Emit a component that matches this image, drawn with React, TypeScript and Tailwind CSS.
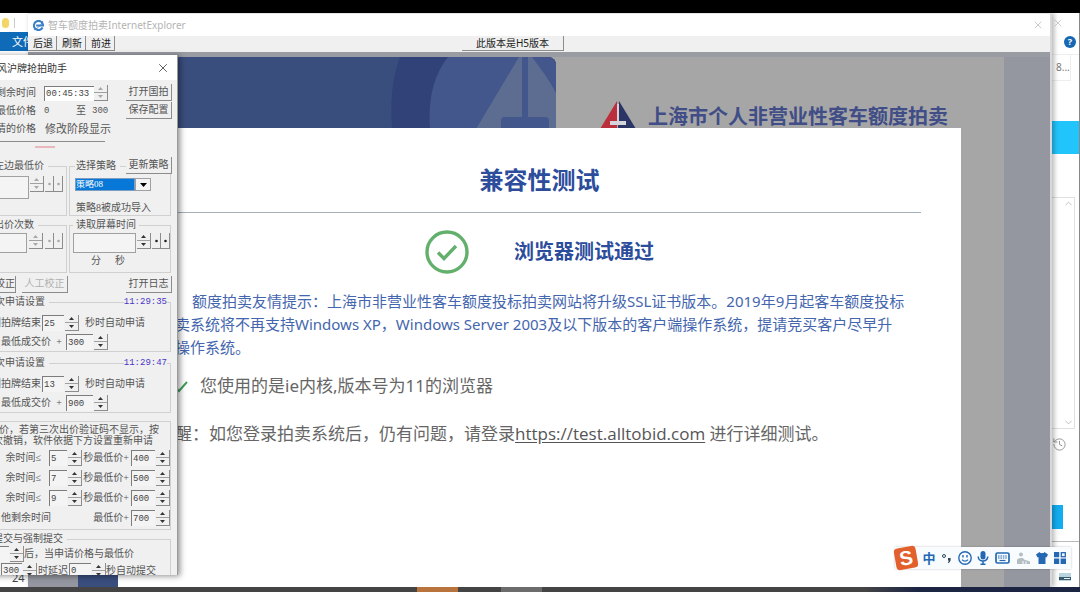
import React from "react";
import { X, History, ChevronUp, ChevronDown } from "lucide-react";

const SANS = "font-['Noto_Sans','Noto_Sans_CJK_SC',sans-serif]";
const SONG = "font-['Liberation_Serif','Noto_Sans_CJK_SC',serif]";
const MONO = "font-['Liberation_Mono',monospace]";

function Spinner({ label, muted = false }: { label: string; muted?: boolean }) {
  const tone = muted ? "text-[#a8a8a8]" : "text-[#333]";
  return (
    <span className={`flex h-4 w-[14px] shrink-0 flex-col border-r border-b border-[#8c8c8c] ${tone}`}>
      <button aria-label={`${label} 增加`} className="flex flex-1 items-center justify-center border-b border-[#a0a0a0]">
        <svg width="5" height="3" viewBox="0 0 5 3"><path d="M2.5 0 5 3H0z" fill="currentColor" /></svg>
      </button>
      <button aria-label={`${label} 减少`} className="flex flex-1 items-center justify-center">
        <svg width="5" height="3" viewBox="0 0 5 3"><path d="M0 0h5L2.5 3z" fill="currentColor" /></svg>
      </button>
    </span>
  );
}

function NumberBox({ label, value, box }: { label: string; value: string; box: string }) {
  return (
    <span className="flex items-center gap-px">
      <input
        aria-label={label}
        defaultValue={value}
        className={`h-4 border-t border-l border-[#7c7c7c] bg-[#f4f4f4] pl-px text-[9px] leading-none text-[#444] ${MONO} ${box}`}
      />
      <Spinner label={label} />
    </span>
  );
}

function SideButtons({ muted = false }: { muted?: boolean }) {
  const tone = muted ? "text-[#a8a8a8]" : "text-[#222]";
  return (
    <span className={`flex h-4 ${tone}`}>
      {["向左", "向右"].map((name) => (
        <button key={name} aria-label={name} className="flex w-[9px] items-center justify-center border-r border-b border-[#8c8c8c]">
          <svg width="3" height="4" viewBox="0 0 3 4"><circle cx="1.5" cy="2" r="1.3" fill="currentColor" /></svg>
        </button>
      ))}
    </span>
  );
}

function PushButton({ children, disabled = false }: { children: React.ReactNode; disabled?: boolean }) {
  return (
    <button
      disabled={disabled}
      className="h-[17px] w-[46px] border-r border-b border-[#8c8c8c] bg-[#f0f0f0] text-[10px] leading-none whitespace-nowrap disabled:text-[#b0b0b0]"
    >
      {children}
    </button>
  );
}

function ApplyGroup({ time, seconds, price }: { time: string; seconds: string; price: string }) {
  return (
    <fieldset className="mr-[6px] h-14 border-r border-b border-[#d0d0d0]">
      <legend className="flex w-full items-center pl-[11px] leading-3">
        <span>次申请设置</span>
        <span className="ml-1 h-px flex-1 bg-[#d0d0d0]" />
        <span className={`text-[9px] text-[#4a35c8] ${MONO}`}>{time}</span>
        <span className="h-px w-[3px] bg-[#d0d0d0]" />
      </legend>
      <div className="flex flex-col gap-px pt-1.5">
        <div className="flex h-[18px] items-center">
          <span className="flex w-[58px] justify-end pr-px whitespace-nowrap">国拍牌结束</span>
          <NumberBox label="结束秒数" value={seconds} box="w-[22px]" />
          <span className="pl-1.5">秒时自动申请</span>
        </div>
        <div className="flex h-[18px] items-center">
          <span className="flex w-[82px] justify-between pr-1 pl-[17px]">
            <span>最低成交价</span>
            <span>+</span>
          </span>
          <NumberBox label="加价" value={price} box="w-[27px]" />
        </div>
      </div>
    </fieldset>
  );
}

function RetryRow({ seconds, price }: { seconds?: string; price: string }) {
  return (
    <div className="flex h-5 items-center">
      {seconds ? (
        <>
          <span className="flex w-16 justify-end pr-2">余时间≤</span>
          <NumberBox label="剩余秒数" value={seconds} box="w-[18px]" />
        </>
      ) : (
        <span className="w-[97px] pl-4">他剩余时间</span>
      )}
      <span className="ml-auto pr-0.5">{seconds ? "秒最低价+" : "最低价+"}</span>
      <NumberBox label="加价" value={price} box="w-6" />
    </div>
  );
}

function HelperWindow() {
  return (
    <section
      className={`absolute top-[42px] bottom-3 -left-4 flex w-[194px] flex-col overflow-hidden border-r border-[#999] bg-[#f0f0f0] text-[10px] leading-3 whitespace-nowrap text-[#555] shadow-[2px_1px_6px_rgba(0,0,0,0.45)] ${SONG}`}
    >
      <header className={`flex h-[25px] shrink-0 items-center justify-between bg-white pr-[7px] pl-[13px] text-[#333] ${SANS}`}>
        <h2>风沪牌抢拍助手</h2>
        <button aria-label="关闭" className="text-[#555]"><X size={14} strokeWidth={1.6} /></button>
      </header>

      <div className="flex shrink-0 justify-between pt-1 pr-[5px]">
        <div>
          <div className="flex h-[18px] items-center">
            <label htmlFor="remain" className="w-[52px] text-right">剩余时间</label>
            <input id="remain" defaultValue="00:45:33" className={`ml-2 h-[15px] w-[50px] border-t border-l border-[#7c7c7c] bg-white pl-px text-[9px] text-[#444] ${MONO}`} />
            <Spinner label="剩余时间" muted />
          </div>
          <div className="flex h-[18px] items-center">
            <span className="w-[52px] text-right">最低价格</span>
            <span className={`ml-2 w-8 text-[9px] ${MONO}`}>0</span>
            <span className="w-4">至</span>
            <span className={`text-[9px] ${MONO}`}>300</span>
          </div>
          <div className="flex h-[18px] items-center">
            <span className="flex w-[52px] justify-end">情的价格</span>
            <span className="ml-[9px] text-[11px]">修改阶段显示</span>
          </div>
        </div>
        <div className="flex flex-col gap-px">
          <PushButton>打开国拍</PushButton>
          <PushButton>保存配置</PushButton>
        </div>
      </div>

      <div className="mt-[3px] mr-[72px] flex h-[19px] shrink-0 justify-center border-t border-[#8c8c8c] pt-1">
        <span className="h-[2px] w-5 bg-[#e8b8bc]" />
      </div>

      <div className="relative grid shrink-0 grid-cols-[83px_1fr] gap-x-0.5 gap-y-[3px] pr-[6px]">
        <fieldset className="h-14 border border-[#d0d0d0]">
          <legend className="ml-[9px] pr-1">左边最低价</legend>
          <div className="flex items-start gap-px pt-1">
            <input aria-label="左边最低价" className="h-[23px] w-11 border border-[#a0a0a0] bg-[#f4f4f4]" />
            <Spinner label="左边最低价" muted />
            <SideButtons muted />
          </div>
        </fieldset>
        <fieldset className="h-14 border border-[#d0d0d0] pl-[5px]">
          <legend className="pr-1 pl-px">选择策略</legend>
          <div className="mt-1.5 flex h-[13px] w-[76px] text-white">
            <select aria-label="选择策略" className="h-full flex-1 appearance-none border border-[#7c9cc0] bg-[#0878d8] text-[9px] leading-none">
              <option>策略08</option>
            </select>
            <span className="flex w-4 items-center justify-center border border-[#a0a0a0] bg-[#f4f4f4] text-black">
              <svg width="7" height="4" viewBox="0 0 7 4"><path d="M0 0h7L3.5 4z" fill="currentColor" /></svg>
            </span>
          </div>
          <p className="mt-[11px] pl-px">策略8被成功导入</p>
        </fieldset>
        <div className="absolute -top-[3px] right-[5px]"><PushButton>更新策略</PushButton></div>

        <fieldset className="h-[54px] border border-[#d0d0d0]">
          <legend className="ml-[9px] pr-1">出价次数</legend>
          <div className="flex items-start gap-0.5 pt-0.5">
            <input aria-label="出价次数" className="h-5 w-[42px] border border-[#a0a0a0] bg-[#f4f4f4]" />
            <Spinner label="出价次数" muted />
            <SideButtons muted />
          </div>
        </fieldset>
        <fieldset className="h-[54px] border border-[#d0d0d0] pl-[3px]">
          <legend className="px-[3px]">读取屏幕时间</legend>
          <div className="flex items-start gap-px pt-0.5">
            <input aria-label="读取屏幕时间" className="h-5 w-[63px] border border-[#a0a0a0] bg-[#f4f4f4]" />
            <Spinner label="读取屏幕时间" />
            <SideButtons />
          </div>
          <p className="flex gap-[14px] pt-0.5 pl-[18px]"><span>分</span><span>秒</span></p>
        </fieldset>
      </div>

      <div className="mt-[3px] mb-[3px] flex h-[17px] shrink-0 items-center pr-[5px]">
        <button className="h-[17px] w-8 border-r border-b border-[#8c8c8c] text-right">校正</button>
        <span className="ml-1.5"><PushButton disabled>人工校正</PushButton></span>
        <span className="ml-auto"><PushButton>打开日志</PushButton></span>
      </div>

      <div className="flex shrink-0 flex-col gap-[5px]">
        <ApplyGroup time="11:29:35" seconds="25" price="300" />
        <ApplyGroup time="11:29:47" seconds="13" price="900" />
      </div>

      <section className="mt-2 mr-[6px] h-[109px] shrink-0 border border-[#d0d0d0]">
        <p className="pt-0.5 pl-[14px] leading-[11px]">价，若第三次出价验证码不显示，按</p>
        <p className="pb-0.5 pl-2 leading-[11px]">次撤销，软件依据下方设置重新申请</p>
        <RetryRow seconds="5" price="400" />
        <RetryRow seconds="7" price="500" />
        <RetryRow seconds="9" price="600" />
        <RetryRow price="700" />
      </section>

      <fieldset className="mt-[3px] mr-[6px] shrink-0 border border-[#d0d0d0]">
        <legend className="pr-1 pl-2">提交与强制提交</legend>
        <div className="flex h-[17px] items-center">
          <NumberBox label="提交秒数" value="" box="w-6" />
          <span>后，当申请价格与最低价</span>
        </div>
        <div className="flex h-[17px] items-center pl-4">
          <NumberBox label="价差" value="300" box="w-[21px]" />
          <span className="px-px">时延迟</span>
          <NumberBox label="延迟秒数" value="0" box="w-[22px]" />
          <span>秒自动提交</span>
        </div>
      </fieldset>
    </section>
  );
}

function Sailboat() {
  return (
    <svg className="h-[72px] w-[172px]" viewBox="0 0 172 72" aria-hidden="true">
      <path d="M16 0h156v72H8C6 44 8 22 16 0z" fill="#304277" />
      <path d="M64 0h108v72H46C44 46 48 20 64 0z" fill="#43578c" />
      <path d="M135 0 92 72h48V0z" fill="#5d6c91" />
      <path d="M143 0h5c9 12 18 24 24 36v36h-29z" fill="#5d6c91" />
      <path d="M138 0h6v62h-6z" fill="#43578c" />
      <rect x="117" y="60" width="48" height="16" rx="4" fill="#43578c" />
    </svg>
  );
}

function TestDialog() {
  return (
    <section className="absolute top-[71px] right-[43px] bottom-0 left-10 bg-white px-10">
      <h1 className="flex h-[85px] items-center justify-center border-b border-[#a4b0ba] pt-5 text-2xl font-bold text-[#2c4c9c]">兼容性测试</h1>
      <div className="flex h-[77px] items-center justify-center gap-[45px]">
        <svg width="44" height="44" viewBox="0 0 44 44" fill="none" stroke="#62b06c" strokeWidth="3.4" aria-hidden="true">
          <circle cx="22" cy="22" r="20" />
          <path d="m13 22.5 6 6 12-12.5" />
        </svg>
        <h2 className="text-xl font-bold text-[#2c4c9c]">浏览器测试通过</h2>
      </div>
      <p className="pl-0.5 text-[15px] leading-[23px] whitespace-nowrap text-[#4466ae]">
        <span className="block pl-8">额度拍卖友情提示：上海市非营业性客车额度投标拍卖网站将升级SSL证书版本。2019年9月起客车额度投标</span>
        <span className="block">拍卖系统将不再支持Windows XP，Windows Server 2003及以下版本的客户端操作系统，提请竞买客户尽早升</span>
        <span className="block">级操作系统。</span>
      </p>
      <p className="mt-[15px] flex h-6 items-center gap-3 pl-4 text-[17px] text-[#666]">
        <svg width="14" height="14" viewBox="0 0 14 14" fill="none" stroke="#3fa05a" strokeWidth="2" aria-hidden="true"><path d="m1 8 4 4 8-9" /></svg>
        您使用的是ie内核,版本号为11的浏览器
      </p>
      <p className="mt-6 h-6 text-[17px] leading-6 whitespace-nowrap text-[#666]">
        提醒：如您登录拍卖系统后，仍有问题，请登录
        <a href="https://test.alltobid.com" className="font-['Open_Sans',sans-serif] text-[#555] underline underline-offset-2">https://test.alltobid.com</a> 进行详细测试。
      </p>
    </section>
  );
}

function BrowserWindow() {
  return (
    <main className="absolute inset-y-0 right-[28px] left-[28px] flex flex-col border-t border-r-2 border-t-[#e4e4e4] border-r-[#d8d8dc] bg-[#9496a0] shadow-[2px_0_5px_rgba(0,0,0,0.3)]">
      <header className="flex h-[22px] shrink-0 items-center bg-white pr-[6px] pl-[5px] text-[#b4b4b4]">
        <svg width="11" height="11" viewBox="0 0 12 12" fill="none" stroke="#3b7fc4" aria-hidden="true">
          <path d="M10.5 8.2A5 5 0 1 1 11 6H3.4" strokeWidth="2.2" />
          <path d="M1 10.5C3 11 9 6 10.8 1" strokeWidth="1" />
        </svg>
        <span className={`pl-1 text-[10px] ${SONG}`}>智车额度拍卖</span>
        <span className="text-[10px]">InternetExplorer</span>
        <button aria-label="关闭窗口" className="ml-auto"><X size={12} strokeWidth={1.4} /></button>
      </header>
      <nav className="flex h-4 shrink-0 bg-[#f0f0f0] text-[10px] leading-none text-[#222]">
        {["后退", "刷新", "前进"].map((name) => (
          <button key={name} className="h-[15px] w-[29px] border-r border-b border-[#8c8c8c] pl-0.5">{name}</button>
        ))}
        <button className="mr-auto ml-[347px] h-[15px] w-[102px] border-r border-b border-[#8c8c8c]">此版本是H5版本</button>
      </nav>
      <div className="flex flex-1 border-t-[5px] border-[#9a9ca4] pr-[46px] pl-[50px]">
        <div className="relative flex flex-1 bg-[#a6a6a6]">
          <div className="flex w-[478px] shrink-0 justify-end overflow-hidden rounded-tr-lg bg-[#3a4e7e]">
            <Sailboat />
          </div>
          <div className="flex h-[72px] flex-1 items-end overflow-hidden pl-[44px]">
            <svg width="36" height="28" viewBox="0 0 36 28" aria-hidden="true" className="shrink-0">
              <path d="M17 0v28H0z" fill="#bb2f3c" />
              <path d="M19 0l17 28H18z" fill="#2a3566" />
              <path d="M17 3h2v17h7v4H10v-4h7z" fill="#d4d4da" />
            </svg>
            <strong className="pl-3 text-xl leading-6 whitespace-nowrap text-[#404d86]">上海市个人非营业性客车额度拍卖</strong>
          </div>
          <TestDialog />
        </div>
      </div>
    </main>
  );
}

function Explorer() {
  return (
    <div className="absolute inset-0 flex justify-between bg-white text-[10px]">
      <div className="flex w-28 flex-col">
        <div className="flex h-[19px] items-center gap-[5px] pl-0.5">
          <span className="h-[10px] w-[7px] rounded-sm bg-[#f4d668]" />
          <span className="h-[10px] w-px bg-[#ccc]" />
        </div>
        <button className="h-[19px] bg-[#0f6ab8] pl-3 text-left text-[11px] leading-none text-white">文件</button>
        <span className="mt-auto pb-0.5 pl-3 text-[11px] leading-[14px] text-[#444]">24</span>
      </div>
      <div className="flex w-[28px] flex-col border-r border-[#888] text-[#bbb]">
        <button aria-label="关闭资源管理器" className="flex h-5 items-center"><X size={12} strokeWidth={1.4} /></button>
        <div className="flex h-[22px] items-center justify-end border-b border-[#eee] pr-[3px] pb-1">
          <button aria-label="帮助" className="flex h-3 w-3 items-center justify-center rounded-full bg-[#1668b4] text-[9px] font-bold text-white">?</button>
        </div>
        <div className="mr-2 flex h-[26px] items-center border-r border-b border-[#eee] pl-1 text-[#777]">8...</div>
        <div className="mt-10 h-[33px] bg-[#22c4fc]" />
        <div className="mt-[43px] mr-1 flex h-[232px] flex-col items-end justify-between border-t border-r border-b border-[#e0e0e0]">
          <ChevronUp size={11} />
          <ChevronDown size={11} />
        </div>
        <History size={15} strokeWidth={1.6} className="mt-2 text-[#999]" />
        <button aria-label="发送" className="mt-[53px] h-6 w-[11px] bg-[#12aef0]" />
        <div className="mt-3 flex flex-1 items-end justify-end border-t border-[#bbb] pr-2 pb-1.5">
          <svg width="12" height="8" viewBox="0 0 12 8" aria-hidden="true">
            <rect width="12" height="8" fill="#b8d4de" /><path d="M0 4h12v3H0z" fill="#3a5a70" /><path d="M5 5h6v1H5z" fill="#e8f4f8" />
          </svg>
        </div>
      </div>
    </div>
  );
}

function InputMethodBar() {
  return (
    <div className="absolute right-[9px] bottom-[18px] flex h-[22px] w-[176px] items-center justify-between bg-[#f8fcff] pr-[5px] text-[#2468b4] shadow-[0_0_2px_rgba(0,0,0,0.25)]">
      <span className="flex h-[22px] w-[22px] -rotate-10 items-center justify-center rounded-sm bg-[#e2602c] font-['Liberation_Sans',sans-serif] text-[20px] leading-none font-bold text-white">S</span>
      <button className="text-[13px] leading-none font-bold">中</button>
      <button aria-label="标点" className="text-[#345]">
        <svg width="11" height="11" viewBox="0 0 11 11"><circle cx="3" cy="3" r="1.5" fill="none" stroke="currentColor" /><path d="M7 5h2.6v2.4L8 10H7l.8-2.4H7z" fill="currentColor" /></svg>
      </button>
      <button aria-label="表情">
        <svg width="14" height="14" viewBox="0 0 14 14" fill="none" stroke="currentColor" strokeWidth="1.4"><circle cx="7" cy="7" r="6.2" /><path d="M5 4v2.4M9 4v2.4M4 8.6c1.6 2 4.4 2 6 0" /></svg>
      </button>
      <button aria-label="语音">
        <svg width="12" height="14" viewBox="0 0 12 14"><rect x="3.5" y="0" width="5" height="8.5" rx="2.5" fill="currentColor" /><path d="M1.2 5.5c0 6 9.6 6 9.6 0M6 10v3M3.5 13.2h5" fill="none" stroke="currentColor" strokeWidth="1.5" /></svg>
      </button>
      <button aria-label="键盘">
        <svg width="15" height="12" viewBox="0 0 15 12" fill="none" stroke="currentColor"><rect x="1" y="1" width="13" height="10" rx="1.5" strokeWidth="1.7" /><path d="M3 4h9M3 6h9" strokeWidth="1.2" strokeDasharray="1.6 .8" /><path d="M4.5 8.5h6" strokeWidth="1.2" /></svg>
      </button>
      <button aria-label="手写" className="text-[#b4bcc4]">
        <svg width="15" height="13" viewBox="0 0 15 13"><circle cx="5" cy="2.5" r="2" fill="currentColor" /><path d="M1 12V8.5c0-3 7-3 7-1l6 2V12z" fill="currentColor" /><path d="M7 9v3M10 9.5V12" stroke="#fff" /></svg>
      </button>
      <button aria-label="皮肤">
        <svg width="12" height="12" viewBox="0 0 12 12"><path d="M3.5 0c1 1.6 4 1.6 5 0L12 2.5 10.5 5.500 9.5 5v7h-7V5l-1 .5L0 2.5z" fill="currentColor" /></svg>
      </button>
      <button aria-label="工具箱">
        <svg width="12" height="12" viewBox="0 0 12 12"><path d="M0 0h5.2v5.2H0zM0 6.6h5.2V12H0zM6.6 6.6H12V12H6.600z" fill="currentColor" /><rect x="7.3" y=".7" width="4" height="4" fill="none" stroke="currentColor" strokeWidth="1.3" /></svg>
      </button>
    </div>
  );
}

export default function App() {
  return (
    <div className={`flex h-screen flex-col overflow-hidden bg-black ${SANS}`}>
      <div className="h-[13px] shrink-0" />
      <div className="relative flex-1 overflow-hidden">
        <Explorer />
        <BrowserWindow />
        <HelperWindow />
        <InputMethodBar />
      </div>
      <footer className="flex h-[5px] shrink-0 bg-gradient-to-r from-[#444] from-80% to-[#1c2444] to-85%">
        <span className="w-[417px]" />
        <span className="w-[41px] bg-[#b8743c]" />
        <span className="ml-[43px] w-[41px] bg-[#6c6c6c]" />
      </footer>
    </div>
  );
}
